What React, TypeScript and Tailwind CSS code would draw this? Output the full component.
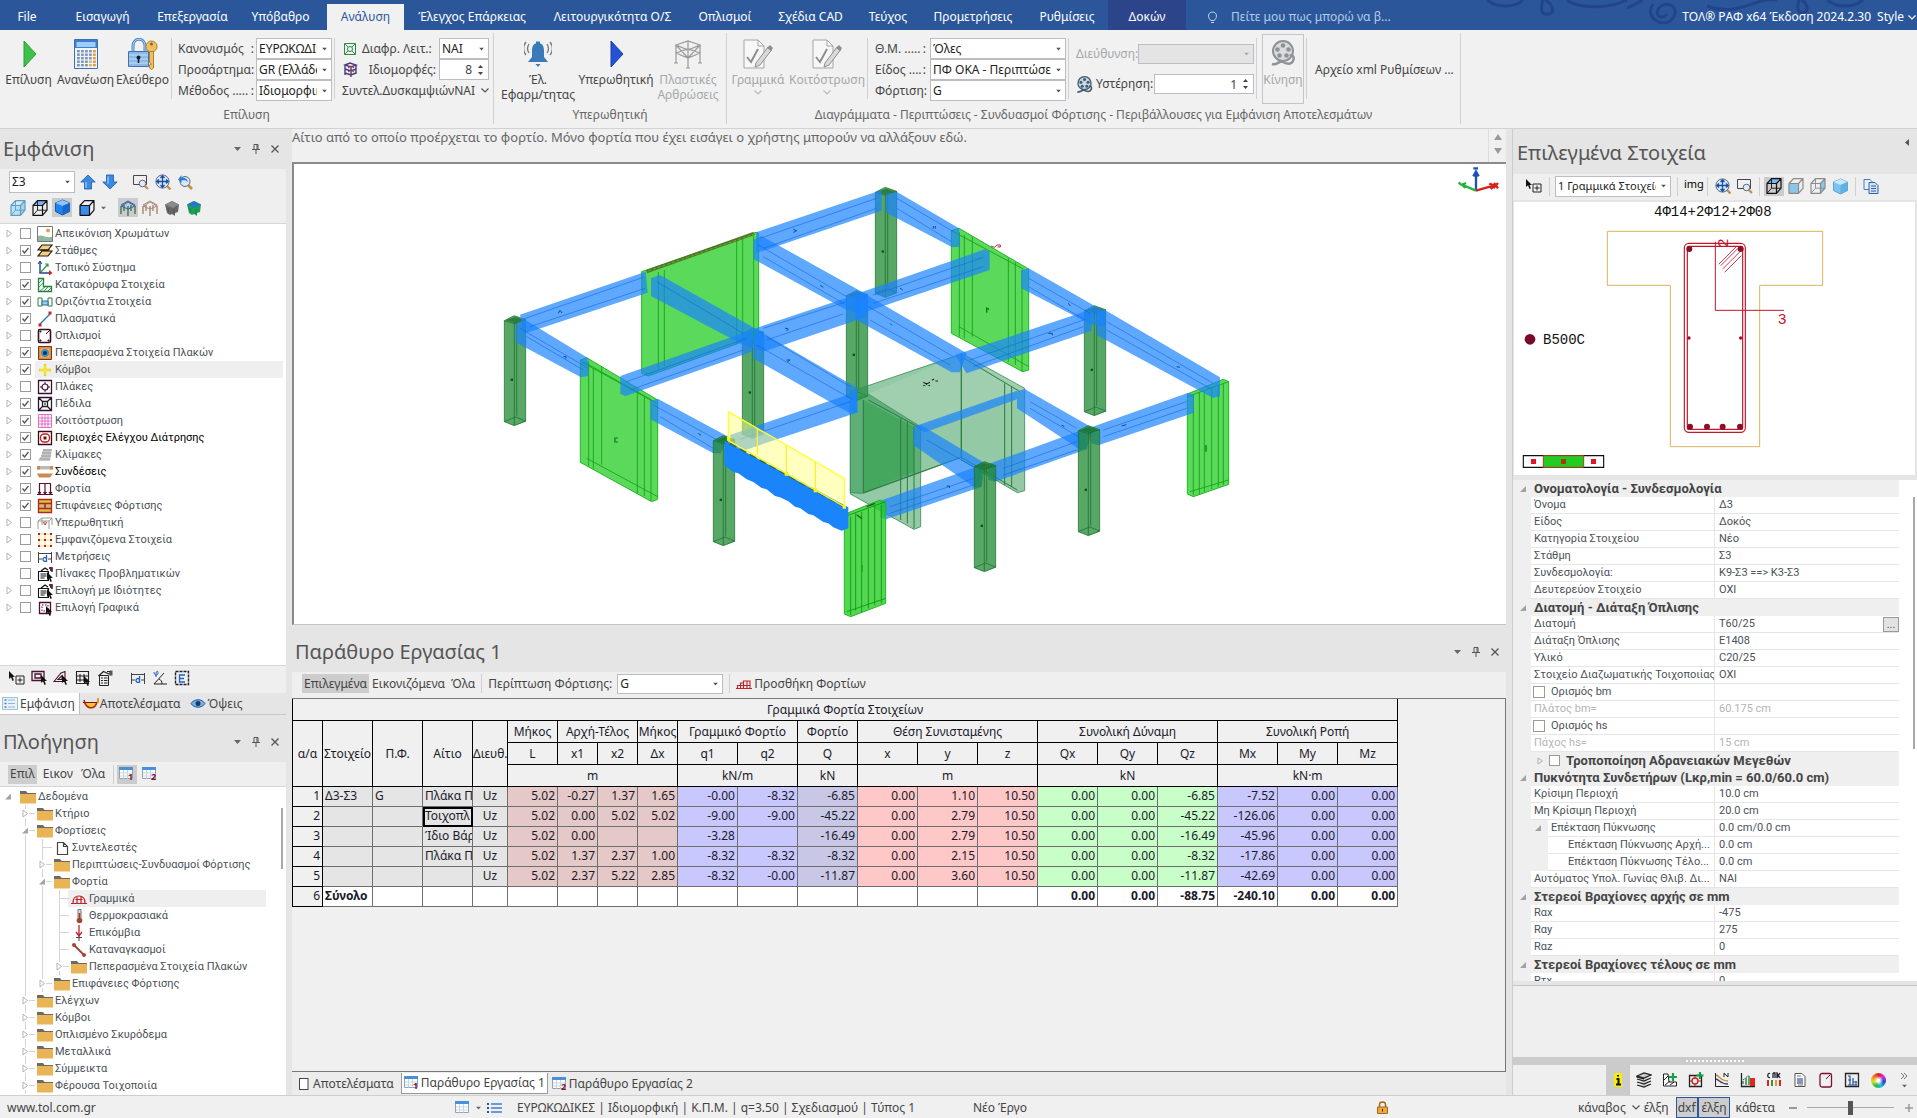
import React from "react";

type Kids = { children?: React.ReactNode };

/* ---------- small building blocks ---------- */

function Ic({ children, s = 16, vb = 16 }: Kids & { s?: number; vb?: number }) {
  return (
    <svg width={s} height={s} viewBox={`0 0 ${vb} ${vb}`} fill="none" className="block shrink-0" aria-hidden="true">
      {children}
    </svg>
  );
}

function Caret({ className = "" }: { className?: string }) {
  return (
    <svg width="7" height="4" viewBox="0 0 7 4" className={`shrink-0 ${className}`} aria-hidden="true">
      <path d="M0 0h7L3.500 4z" fill="#666" />
    </svg>
  );
}

function Chevron({ color = "#555" }: { color?: string }) {
  return (
    <svg width="8" height="5" viewBox="0 0 8 5" fill="none" className="shrink-0" aria-hidden="true">
      <path d="M.5.5 4 4 7.500.5" stroke={color} strokeWidth="1.200" />
    </svg>
  );
}

function Combo({ value, label, className = "", id, disabled = false }: { value: string; label?: string; className?: string; id?: string; disabled?: boolean }) {
  return (
    <span className={`relative block shrink-0 ${className}`}>
      <select
        id={id}
        aria-label={label}
        disabled={disabled}
        defaultValue={value}
        className="block h-full w-full appearance-none overflow-hidden border border-[#bcbcc4] bg-white pl-[2px] pr-[14px] text-[#222] disabled:bg-[#e4e4e4]"
      >
        <option value={value}>{value}</option>
      </select>
      <svg width="5" height="3" viewBox="0 0 5 3" className="pointer-events-none absolute right-[5px] top-1/2 -translate-y-1/2" aria-hidden="true">
        <path d="M0 0h5L2.500 3z" fill={disabled ? "#aaa" : "#555"} />
      </svg>
    </span>
  );
}

function Spin({ value, label, id, className = "" }: { value: string; label?: string; id?: string; className?: string }) {
  return (
    <span className={`relative block shrink-0 ${className}`}>
      <input id={id} aria-label={label} defaultValue={value} className="block h-full w-full border border-[#bcbcc4] bg-white pr-[16px] text-right text-xs text-[#444]" />
      <svg width="5" height="10" viewBox="0 0 5 10" className="pointer-events-none absolute right-[6px] top-1/2 -translate-y-1/2" aria-hidden="true">
        <path d="M0 3h5L2.500 0zM0 7h5L2.500 10z" fill="#444" />
      </svg>
    </span>
  );
}

function Sep({ className = "" }: { className?: string }) {
  return <div className={`w-px shrink-0 bg-[#d0d0d0] ${className}`} />;
}

function IconBtn({ children, on = false, label }: Kids & { on?: boolean; label: string }) {
  return (
    <button aria-label={label} className={`flex h-[19px] w-[20px] shrink-0 items-center justify-center ${on ? "bg-[#cbcbcb]" : ""}`}>
      {children}
    </button>
  );
}

function PanelTitle({ children }: Kids) {
  return (
    <div className="flex h-10 shrink-0 items-center bg-[#e5e5e5] pl-[3px] pr-[7px]">
      <h2 className="flex-1 text-xl text-[#555]">{children}</h2>
      <div className="flex items-center gap-[10px]">
        <button aria-label="Μενού"><Caret /></button>
        <button aria-label="Καρφίτσωμα">
          <Ic s={10} vb={10}><path d="M3 .5h4v5H3zM6 .5v5M1 5.500h8M5 5.500V10" stroke="#555" /></Ic>
        </button>
        <button aria-label="Κλείσιμο">
          <Ic s={8} vb={8}><path d="m.5.5 7 7m0-7-7 7" stroke="#555" strokeWidth="1.300" /></Ic>
        </button>
      </div>
    </div>
  );
}

/* ---------- icons ---------- */

function Cube({ front = "none", top = "none", side = "none", line = "#111", back = true }: { front?: string; top?: string; side?: string; line?: string; back?: boolean }) {
  return (
    <Ic>
      <path d="M1 5.500h9.500v10H1z" fill={front} />
      <path d="M1 5.500 5.500.7H15L10.500 5.500z" fill={top} />
      <path d="M10.500 5.500 15 .7v9.500l-4.500 5z" fill={side} />
      {back && <path d="M5.500.7v9.500H15M5.500 10.200 1 15.300" stroke={line} strokeWidth=".9" />}
      <path d="M1 5.500h9.500v9.800H1zM1 5.500 5.500.7H15L10.500 5.500M15 .7v9.500l-4.500 5.100" stroke={line} strokeWidth="1.200" strokeLinejoin="round" />
    </Ic>
  );
}
const SolidCube = ({ light = false }: { light?: boolean }) => (
  <Ic s={17} vb={17}>
    <path d="M8.500 1 15.500 4v8.500l-7 3.500-7-3.500V4z" fill={light ? "#7cc3ef" : "#2383ec"} stroke={light ? "#5aa4d4" : "#1458b5"} />
    <path d="M8.500 1 15.500 4l-7 3-7-3z" fill={light ? "#c9e8fb" : "#8cc4fb"} />
    <path d="M8.500 7v9l7-3.500V4z" fill={light ? "#5fb0e4" : "#1668cf"} />
  </Ic>
);
const ZoomWin = () => (
  <Ic>
    <path d="M.5 1.500h13v9H.5z" stroke="#445" />
    <path d="m11.500 11.500 3.500 3.500" stroke="#c98a4b" strokeWidth="2.200" />
    <circle cx="9.500" cy="9.500" r="3.300" fill="#dcecf8" stroke="#667" />
  </Ic>
);
const ZoomAll = () => (
  <Ic>
    <path d="m12 12 3.500 3.500" stroke="#c98a4b" strokeWidth="2.400" />
    <circle cx="7.500" cy="7.500" r="6.600" fill="#d5e7f8" stroke="#5c6c88" />
    <path d="M7.500 2v11M2 7.500h11M5.500 4l2-2.200 2 2.200m-4 7 2 2.200 2-2.200M4 5.500 1.800 7.500 4 9.500m7-4 2.200 2L11 9.500" stroke="#1b4f9c" strokeWidth="1.300" />
  </Ic>
);
const ZoomPrev = () => (
  <Ic>
    <path d="m11 11 4 4" stroke="#c98a4b" strokeWidth="2.600" />
    <circle cx="8" cy="7.500" r="5" fill="#d5e7f8" stroke="#667" />
    <path d="M1 5.500 4.500 1v2.500c3 0 5.500 1 6.500 4.500-1.500-1.500-3.500-1.800-6.500-1.600V9z" fill="#2a7fd4" />
  </Ic>
);
const BlueArrow = ({ down = false }: { down?: boolean }) => (
  <Ic>
    <path d={down ? "M8 15 .8 8H4.500V1h7v7h3.700z" : "M8 1 .8 8H4.500v7h7V8h3.700z"} fill="#3a8ae2" stroke="#2566ae" strokeWidth=".9" />
    <path d={down ? "M6 2.500v7" : "M6 8v6"} stroke="#8bc2f5" strokeWidth="1.500" />
  </Ic>
);
const Frame3D = ({ c = "#2b6b3a", t = "#2a5fb8" }: { c?: string; t?: string }) => (
  <Ic>
    <path d="M1 6v8M4 5v6M8 6v10M11 5v6M15 5.500V14" stroke={c} strokeWidth="1.200" />
    <path d="M1 6.500 8 2l7 4M1 5l7-4 7 4M1 6l7 3 7-3" stroke={t} strokeWidth="1" />
  </Ic>
);
const Blob = ({ a, b }: { a: string; b: string }) => (
  <Ic>
    <path d="M1 4.500 8 1l7 3.500-1 7.500-3 1v3l-3-2-2 1-3-2z" fill={a} />
    <path d="M1 4.500 8 1l7 3.500L9 8z" fill={b} />
    <path d="m4 8 .5 4M10 9v5" stroke="#0003" />
  </Ic>
);
const CursorPath = ({ x = 0, y = 0 }: { x?: number; y?: number }) => (
  <path transform={`translate(${x} ${y})`} d="M0 0v8l2-1.700L3.500 10l1.400-.7L3.500 6H6z" fill="#111" />
);
const SelPlus = () => (
  <Ic><CursorPath x={0} y={1} /><path d="M7 6h8v8H7zM11 7.500v5M8.500 10h5" stroke="#222" /></Ic>
);
const Folder = () => (
  <Ic>
    <path d="M0 2h6l1.500 2H16v2H0z" fill="#6d6a63" />
    <path d="M0 5h16v9.500H0z" fill="#e9b456" />
  </Ic>
);
const GridDoc = ({ n }: { n: string }) => (
  <svg width="16" height="16" viewBox="0 0 16 16" className="block shrink-0" aria-hidden="true">
    <path d="M.5 2.500h13v10H.5z" fill="#fff" stroke="#8fa3b8" />
    <path d="M0 1h14v3H0z" fill="#4a90d6" />
    <path d="M4.500 4v8.500m4-8.500v8.500M1 7h12M1 10h12" stroke="#c7d6e4" fill="none" />
    <text x="9" y="14" fontSize="9" fontWeight="700" fill="#7d1030" fontFamily="Noto Sans">{n}</text>
  </svg>
);
const Dim = () => (
  <svg width="16" height="16" viewBox="0 0 16 16" fill="none" className="block shrink-0" aria-hidden="true">
    <path d="M1 4.500h14M1.500 3v11M14.500 3v11M2 10h3m6 0h3" stroke="#444" />
    <path d="M9.500 6v7M9.500 9.500c-1-1.500-3.500-1-3.500 1s2.500 2.500 3.500 1" stroke="#1f5fc8" strokeWidth="1.300" />
  </svg>
);
const PropPick = () => (
  <Ic>
    <path d="M1.500 5.500h10v9h-10zM3.500 8h6M3.500 10h6M3.500 12h4" stroke="#111" strokeWidth="1.100" />
    <path d="M4 5 8 2l3 2M12 2h3v4" stroke="#111" strokeWidth="1.300" />
    <path d="M13 1h2.500v4H13z" fill="#6b1f4a" />
    <CursorPath x={10} y={6} />
  </Ic>
);
const PropHand = () => (
  <Ic>
    <path d="M2.500 5.500h9v10h-9zM4 8h2m1 0h3.500M4 10.500h2m1 0h3.500M4 13h2m1 0h3.500" stroke="#222" />
    <path d="m1.500 6 5-4.500L12 4M10 1.500h3v4" stroke="#222" strokeWidth="1.200" />
    <path d="M13 .5h2.500v5H13z" fill="#4b5a6a" />
  </Ic>
);
const DocPencil = () => (
  <Ic s={30} vb={30}>
    <path d="M1 1h14l6 6v22H1z" fill="#f7f7f7" stroke="#a5a5a5" />
    <path d="M15 1v6h6" stroke="#a5a5a5" />
    <path d="m4 18 4 5 7-13" stroke="#8e8e8e" strokeWidth="2" />
    <path d="m13 24 12-16 3.500 3L17 26l-5 2z" fill="#d9d9d9" stroke="#8e8e8e" />
    <path d="m24 9 3-3 3 3-2 3z" fill="#8e8e8e" />
  </Ic>
);
const Reel = ({ s = 26, c = "#8f9398", f = "#d9dbdd" }: { s?: number; c?: string; f?: string }) => (
  <Ic s={s} vb={26}>
    <circle cx="13" cy="11" r="10" fill={f} stroke={c} strokeWidth="2" />
    <circle cx="13" cy="5.500" r="2.300" fill={c} />
    <circle cx="7.500" cy="9.500" r="2.300" fill={c} />
    <circle cx="18.500" cy="9.500" r="2.300" fill={c} />
    <circle cx="9.500" cy="15.500" r="2.300" fill={c} />
    <circle cx="16.500" cy="15.500" r="2.300" fill={c} />
    <path d="M2 24c5 2 7-4 11-2s8 3 10-1-1-7-3-5" stroke={c} strokeWidth="2.500" />
  </Ic>
);
const Calc = () => (
  <Ic s={32} vb={32}>
    <path d="M4.500 1.500h23v29h-23z" fill="#eef4fb" stroke="#3f6ea8" />
    <path d="M5 2h22v8H5z" fill="#3a7fd0" />
    <path d="M6.500 4h19v5h-19z" fill="#9fcdf5" />
    {[0, 1, 2, 3, 4].map((r) =>
      [0, 1, 2, 3, 4].map((c) => (
        <path key={`${r}-${c}`} d={`M${7 + c * 4} ${12 + r * 3.5}h2.800v2.400h-2.800z`} fill={c === 4 ? "#e59a3c" : r > 2 && c > 2 ? "#d9b36a" : "#7f97b5"} />
      ))
    )}
  </Ic>
);
const LockKey = () => (
  <Ic s={32} vb={32}>
    <path d="M6 13V8c0-9 12-9 12 0v5" stroke="#4c86c8" strokeWidth="3" />
    <path d="M6 13V8c0-9 12-9 12 0v5" stroke="#b9d7f4" strokeWidth="1" />
    <path d="M1.500 13.500h20v15h-20z" fill="#8bb9ea" stroke="#3d73b3" />
    <path d="M2 17h19M2 21h19M2 25h19" stroke="#c4def7" />
    <circle cx="11.500" cy="19.500" r="2" fill="#123" />
    <path d="M11.500 20v5" stroke="#123" strokeWidth="1.600" />
    <circle cx="24.500" cy="8.500" r="5.500" fill="#edc063" stroke="#b07f28" />
    <circle cx="24.500" cy="6" r="1.500" fill="#8c6220" />
    <path d="M22.500 13.500h4V30l-2 1.500-2-1.500v-3l2-1-2-1.500z" fill="#edc063" stroke="#b07f28" />
  </Ic>
);
const Play = ({ c, d }: { c: string; d: string }) => (
  <Ic s={28} vb={28}><path d="M9 1v26l12-13z" fill={c} stroke={d} /></Ic>
);
const Bell = () => (
  <Ic s={28} vb={28}>
    <path d="M14 3c-5 0-6 4-6 8v6l-4 5h20l-4-5v-6c0-4-1-8-6-8z" fill="#3a7ab8" />
    <path d="M12 1.500h4V4h-4zM11.500 24h5l-2.500 3z" fill="#3a7ab8" />
    <path d="M5 4c-2 3-2 6 0 9M2 2c-3 4-3 9 0 13M23 4c2 3 2 6 0 9M26 2c3 4 3 9 0 13" stroke="#777" strokeWidth="1.300" />
  </Ic>
);
const FrameGray = () => (
  <Ic s={30} vb={30}>
    <path d="m3 6 12-4 12 4-12 5zM3 6v18M15 11v18M27 6v18M3 14l12 5 12-5M3 14l12-4 12 4M15 2v8M3 6l12 13M27 6 15 19M1 24h4M13 29h4M25 24h4" stroke="#999" strokeWidth="1.200" />
  </Ic>
);

const treeIcons: Record<string, React.ReactNode> = {
  colors: <Ic><path d="M.5.5h15v15H.5z" fill="#fff" stroke="#777" /><circle cx="11" cy="4.500" r="2" fill="#d8a25c" /><path d="M1 10c4-2 6 2 14 1v4H1z" fill="#8fb8a0" /></Ic>,
  levels: <Ic><path d="M5 2h10l-4 5H1zM5 8h10l-4 5H1z" fill="#f2cf84" stroke="#221a0c" strokeWidth="1.200" /><path d="M3 7h10" stroke="#221a0c" /></Ic>,
  axes: <Ic><path d="M3 1v12h11" stroke="#24408e" strokeWidth="1.400" /><path d="m4 12 7-8M8 4h3v3" stroke="#2f9a46" strokeWidth="1.200" /><path d="m1 4 2-3 2 3" stroke="#24408e" /><path d="m12 10 3.500 3-3.500 2.500z" fill="#c22" /></Ic>,
  vert: <Ic><path d="M1.500 1.500h5v8h8v5h-13z" fill="#eaf6ec" stroke="#2c7d42" strokeWidth="1.300" /><path d="m2 6 4-4M2 10l4-4M3 14l6-5m-2 5 5-5m-1 5 3-3" stroke="#2c7d42" strokeWidth=".8" /></Ic>,
  horiz: <Ic><path d="M1 4h4v8H1zm10 0h4v8h-4z" fill="#fff" stroke="#2c7d42" /><path d="M5 7h6v4H5z" fill="#8fd0ee" stroke="#2c6b9d" /></Ic>,
  plasm: <Ic><path d="M3 13 13 3" stroke="#2a6fb5" strokeWidth="1.200" /><path d="M1.500 12.500h3v3h-3zM11.500.5h3v3h-3z" fill="#c2272d" /></Ic>,
  rebar: <Ic><rect x="1.500" y="1.500" width="12" height="13" rx="1.500" stroke="#3b0a22" strokeWidth="1.600" /><path d="m13 2-4 4M3 3h1v1H3zm8 9h1v1h-1zm-8 0h1v1H3z" stroke="#3b0a22" /></Ic>,
  fem: <Ic><path d="M1.500 1.500h13v13h-13z" fill="#e08a35" stroke="#8a2f1d" /><path d="M3.500 3.500h9v9h-9z" fill="#d8c25e" /><circle cx="8" cy="8" r="4" fill="#3f8fbf" /><circle cx="8" cy="8" r="2" fill="#152a66" /></Ic>,
  node: <Ic><path d="M8 2v12M2 8h12" stroke="#e8d400" strokeWidth="2.400" /><path d="M8 3v10M3 8h10" stroke="#fff25a" strokeWidth=".9" /></Ic>,
  slab: <Ic><path d="M1.500 1.500h13v13h-13z" stroke="#3b1030" strokeWidth="1.300" /><circle cx="8" cy="8" r="3" stroke="#3b1030" strokeWidth="1.200" /><path d="M8 3v2m0 6v2M3 8h2m6 0h2" stroke="#3b1030" /></Ic>,
  foot: <Ic><path d="M1.500 1.500h13v13h-13zM5.500 5.500h5v5h-5zM2 2l3.500 3.500M14 2l-3.500 3.500M2 14l3.500-3.500M14 14l-3.500-3.500" stroke="#2b1830" strokeWidth="1.300" /><path d="M7 7h2v2H7z" fill="#4a9a60" /></Ic>,
  raft: <Ic><path d="M1.500 1.500h13v13h-13zM5 1v14M8 1v14M11 1v14M1 5h14M1 8h14M1 11h14" stroke="#dd6fc4" /></Ic>,
  punch: <Ic><path d="M1.500 1.500h13v13h-13z" stroke="#3b0a22" strokeWidth="1.300" /><rect x="3.500" y="4" width="9" height="8" rx="3.500" stroke="#c22" strokeWidth="1.400" /><path d="M6.500 6.500h3v3h-3z" fill="#611" /></Ic>,
  stairs: <Ic><path d="M6 2h9l-2 12H1l2-4h1l1-4z" fill="#c9c9c9" /><path d="M6 3h9M5 6h9M4 9h10M3 12h10" stroke="#999" /></Ic>,
  conn: <Ic><path d="M0 2h16v3.500H0z" fill="#b9b9b9" /><path d="M0 2h3v3.500H0zm13 0h3v3.500h-3z" fill="#c98a55" /><path d="M0 9.500h16l-3 4H2z" fill="#c98a55" /></Ic>,
  loads: <Ic><path d="M0 13.500h16M2.500 3v10M8 3v10M13.500 3v10M2 2.500h12M1 11l1.500 2L4 11m2.500 0L8 13l1.500-2m2.500 0 1.500 2 1.500-2" stroke="#5b0f2a" strokeWidth="1.200" /></Ic>,
  surf: <Ic><path d="M1.500 1.500h13v13h-13z" fill="#d9c040" stroke="#b3261e" strokeWidth="1.300" /><path d="M2 5.500h12M2 10.500h12M8 6v4" stroke="#b3261e" strokeWidth="1.600" /><path d="M3 7h4v2H3zm6 0h4v2H9z" fill="#b7b7b7" /></Ic>,
  push: <Ic><path d="m1 6 4-3h10l-3 3zM1 6v8M12 6v8M5 3v7M15 3v7" stroke="#9a9a9a" /><path d="M8 6v4m-2-3 2 3 2-3" stroke="#b55" /></Ic>,
  shown: <Ic><path d="M2 2h12M2 8h12M2 14h12M2 2v12M8 2v12M14 2v12" stroke="#f2d86a" /><path d="M1 1h2v2H1zm6 0h2v2H7zm6 0h2v2h-2zM1 7h2v2H1zm6 0h2v2H7zm6 0h2v2h-2zM1 13h2v2H1zm6 0h2v2H7zm6 0h2v2h-2z" fill="#b3261e" /></Ic>,
  dim: <Dim />,
  prop: <PropPick />,
  pick: <Ic><path d="M2.500 2.500h11v11h-11z" stroke="#4a1232" strokeWidth="1.300" /><path d="M5 5h6v6H5z" stroke="#4a1232" strokeDasharray="1.500 1.500" /><CursorPath x={9} y={6} /></Ic>,
};

/* ---------- data ---------- */

const tabs: [string, string][] = [
  ["File", "w-[54px]"], ["Εισαγωγή", "w-[97px]"], ["Επεξεργασία", "w-[83px]"], ["Υπόβαθρο", "w-[93px]"],
  ["Ανάλυση", "w-[77px]"], ["Έλεγχος Επάρκειας", "w-[136px]"], ["Λειτουργικότητα Ο/Σ", "w-[145px]"],
  ["Οπλισμοί", "w-[80px]"], ["Σχέδια CAD", "w-[91px]"], ["Τεύχος", "w-[64px]"], ["Προμετρήσεις", "w-[106px]"],
  ["Ρυθμίσεις", "w-[82px]"], ["Δοκών", "w-[78px]"],
];

type ViewItem = { t: string; i: string; on?: boolean; leaf?: boolean; strong?: boolean; hot?: boolean };
const viewItems: ViewItem[] = [
  { t: "Απεικόνιση Χρωμάτων", i: "colors" }, { t: "Στάθμες", i: "levels", on: true }, { t: "Τοπικό Σύστημα", i: "axes" },
  { t: "Κατακόρυφα Στοιχεία", i: "vert", on: true }, { t: "Οριζόντια Στοιχεία", i: "horiz", on: true },
  { t: "Πλασματικά", i: "plasm", on: true }, { t: "Οπλισμοί", i: "rebar" }, { t: "Πεπερασμένα Στοιχεία Πλακών", i: "fem", on: true },
  { t: "Κόμβοι", i: "node", on: true, hot: true }, { t: "Πλάκες", i: "slab" }, { t: "Πέδιλα", i: "foot", on: true },
  { t: "Κοιτόστρωση", i: "raft", on: true }, { t: "Περιοχές Ελέγχου Διάτρησης", i: "punch", on: true, strong: true },
  { t: "Κλίμακες", i: "stairs", on: true }, { t: "Συνδέσεις", i: "conn", on: true, strong: true }, { t: "Φορτία", i: "loads", on: true },
  { t: "Επιφάνειες Φόρτισης", i: "surf", on: true }, { t: "Υπερωθητική", i: "push" }, { t: "Εμφανιζόμενα Στοιχεία", i: "shown" },
  { t: "Μετρήσεις", i: "dim" }, { t: "Πίνακες Προβληματικών", i: "prop", leaf: true }, { t: "Επιλογή με Ιδιότητες", i: "prop" },
  { t: "Επιλογή Γραφικά", i: "pick" },
];

type NavItem = { t: string; l: number; s: "open" | "shut" | "leaf"; i?: React.ReactNode; hot?: boolean };
const navItems: NavItem[] = [
  { t: "Δεδομένα", l: 0, s: "open" }, { t: "Κτήριο", l: 1, s: "shut" }, { t: "Φορτίσεις", l: 1, s: "open" },
  { t: "Συντελεστές", l: 2, s: "leaf", i: <Ic><path d="M3.500 2.500h6l4 4v8h-10zM9.500 2.500v4h4" fill="#fff" stroke="#444" strokeWidth="1.200" /></Ic> },
  { t: "Περιπτώσεις-Συνδυασμοί Φόρτισης", l: 2, s: "shut" }, { t: "Φορτία", l: 2, s: "open" },
  { t: "Γραμμικά", l: 3, s: "leaf", hot: true, i: <Ic><path d="M0 12.500h16M2 12c0-5 2-7 6-7s6 2 6 7M6 6v6M10 6v6M4.500 8.500h7" stroke="#c22027" strokeWidth="1.200" /></Ic> },
  { t: "Θερμοκρασιακά", l: 3, s: "leaf", i: <Ic><path d="M7 1.500h3v9H7z" fill="#ddd" stroke="#777" /><path d="M8.500 5v7" stroke="#a33" strokeWidth="1.500" /><circle cx="8.500" cy="12.500" r="2.800" fill="#9a4a33" /></Ic> },
  { t: "Επικόμβια", l: 3, s: "leaf", i: <Ic><path d="M8 0v10m-3-3 3 4 3-4" stroke="#c22027" strokeWidth="1.300" /><path d="M5 12.500h6M8 11v5" stroke="#444" /></Ic> },
  { t: "Καταναγκασμοί", l: 3, s: "leaf", i: <Ic><path d="m3 3 10 10" stroke="#a34534" strokeWidth="2" /><circle cx="3" cy="3" r="2" fill="#a34534" /><circle cx="13" cy="13" r="2" fill="#a34534" /></Ic> },
  { t: "Πεπερασμένα Στοιχεία Πλακών", l: 3, s: "shut" }, { t: "Επιφάνειες Φόρτισης", l: 2, s: "shut" },
  { t: "Ελέγχων", l: 1, s: "shut" }, { t: "Κόμβοι", l: 1, s: "shut" }, { t: "Οπλισμένο Σκυρόδεμα", l: 1, s: "shut" },
  { t: "Μεταλλικά", l: 1, s: "shut" }, { t: "Σύμμεικτα", l: 1, s: "shut" }, { t: "Φέρουσα Τοιχοποιία", l: 1, s: "shut" },
];

const rows: string[][] = [
  ["1", "Δ3-Σ3", "G", "Πλάκα Π", "Uz", "5.02", "-0.27", "1.37", "1.65", "-0.00", "-8.32", "-6.85", "0.00", "1.10", "10.50", "0.00", "0.00", "-6.85", "-7.52", "0.00", "0.00"],
  ["2", "", "", "Τοιχοπλ", "Uz", "5.02", "0.00", "5.02", "5.02", "-9.00", "-9.00", "-45.22", "0.00", "2.79", "10.50", "0.00", "0.00", "-45.22", "-126.06", "0.00", "0.00"],
  ["3", "", "", "Ίδιο Βάρ", "Uz", "5.02", "0.00", "", "", "-3.28", "", "-16.49", "0.00", "2.79", "10.50", "0.00", "0.00", "-16.49", "-45.96", "0.00", "0.00"],
  ["4", "", "", "Πλάκα Π", "Uz", "5.02", "1.37", "2.37", "1.00", "-8.32", "-8.32", "-8.32", "0.00", "2.15", "10.50", "0.00", "0.00", "-8.32", "-17.86", "0.00", "0.00"],
  ["5", "", "", "", "Uz", "5.02", "2.37", "5.22", "2.85", "-8.32", "-0.00", "-11.87", "0.00", "3.60", "10.50", "0.00", "0.00", "-11.87", "-42.69", "0.00", "0.00"],
];
const total = ["6", "Σύνολο", "", "", "", "", "", "", "", "", "", "", "", "", "", "0.00", "0.00", "-88.75", "-240.10", "0.00", "0.00"];
const colW = ["w-[30px]", "w-[50px]", "w-[50px]", "w-[50px]", "w-[35px]", "w-[50px]", "w-[40px]", "w-[40px]", "w-[40px]",
  "w-[60px]", "w-[60px]", "w-[60px]", "w-[60px]", "w-[60px]", "w-[60px]", "w-[60px]", "w-[60px]", "w-[60px]", "w-[60px]", "w-[60px]", "w-[60px]"];

function cellTone(c: number) {
  if (c === 0) return "bg-[#f0f0f0] border-black";
  if (c < 5) return "bg-[#e5e5e5]";
  if (c < 9) return "bg-[#e5c8c8]";
  if (c < 11) return "bg-[#c8c8ff]";
  if (c === 11) return "bg-[#c8c8e6]";
  if (c < 15) return "bg-[#ffc8c8]";
  if (c < 18) return "bg-[#c8ffc8]";
  return "bg-[#c8c8ff]";
}

type Prop = { n: string; v?: string; k?: "head" | "check" | "mute" | "sub" | "subsub" | "headcheck"; more?: boolean };
const props: Prop[] = [
  { n: "Ονοματολογία - Συνδεσμολογία", k: "head" }, { n: "Όνομα", v: "Δ3" }, { n: "Είδος", v: "Δοκός" }, { n: "Κατηγορία Στοιχείου", v: "Νέο" },
  { n: "Στάθμη", v: "Σ3" }, { n: "Συνδεσμολογία:", v: "K9-Σ3 ==> K3-Σ3" }, { n: "Δευτερεύον Στοιχείο", v: "ΟΧΙ" },
  { n: "Διατομή - Διάταξη Όπλισης", k: "head" }, { n: "Διατομή", v: "T60/25", more: true }, { n: "Διάταξη Όπλισης", v: "E1408" },
  { n: "Υλικό", v: "C20/25" }, { n: "Στοιχείο Διαζωματικής Τοιχοποιίας", v: "ΟΧΙ" }, { n: "Ορισμός bm", k: "check" },
  { n: "Πλάτος bm=", v: "60.175 cm", k: "mute" }, { n: "Ορισμός hs", k: "check" }, { n: "Πάχος hs=", v: "15 cm", k: "mute" },
  { n: "Τροποποίηση Αδρανειακών Μεγεθών", k: "headcheck" }, { n: "Πυκνότητα Συνδετήρων (Lκρ,min = 60.0/60.0 cm)", k: "head" },
  { n: "Κρίσιμη Περιοχή", v: "10.0 cm" }, { n: "Μη Κρίσιμη Περιοχή", v: "20.0 cm" }, { n: "Επέκταση Πύκνωσης", v: "0.0 cm/0.0 cm", k: "sub" },
  { n: "Επέκταση Πύκνωσης Αρχή...", v: "0.0 cm", k: "subsub" }, { n: "Επέκταση Πύκνωσης Τέλο...", v: "0.0 cm", k: "subsub" },
  { n: "Αυτόματος Υπολ. Γωνίας Θλιβ. Δι...", v: "ΝΑΙ" }, { n: "Στερεοί Βραχίονες αρχής σε mm", k: "head" },
  { n: "Rαx", v: "-475" }, { n: "Rαy", v: "275" }, { n: "Rαz", v: "0" }, { n: "Στερεοί Βραχίονες τέλους σε mm", k: "head" }, { n: "Rτx", v: "0" },
];

/* ---------- ribbon ---------- */

function BigBtn({ icon, children, className = "", muted = false, drop = false }: Kids & { icon: React.ReactNode; className?: string; muted?: boolean; drop?: boolean }) {
  return (
    <button className={`flex shrink-0 flex-col items-center pt-[5px] text-center text-xs leading-[15px] ${muted ? "text-[#a3a8ac]" : "text-[#444]"} ${className}`}>
      <span className="flex h-8 items-center">{icon}</span>
      <span className="mt-[2px] whitespace-nowrap">{children}</span>
      {drop && <span className="mt-[3px]"><Chevron color="#bbb" /></span>}
    </button>
  );
}

function Group({ children, caption, className = "" }: Kids & { caption: string; className?: string }) {
  return (
    <section className={`flex shrink-0 flex-col ${className}`}>
      <div className="flex h-[74px]">{children}</div>
      <div className="text-center text-xs text-[#666]">{caption}</div>
    </section>
  );
}

function Ribbon() {
  return (
    <header className="shrink-0">
      <div className="relative flex h-[30px] items-end bg-[#2b579a] text-xs text-white">
        <svg width="440" height="24" viewBox="0 0 440 24" fill="none" className="absolute right-0 top-0" stroke="#23448a" strokeWidth="3" aria-hidden="true">
          <path d="M10 0c10 8 28 8 36 0M66 0c-4 12 0 15 6 14s4-10-4-14M90 0c10 8 40 10 60-0M150 8c10-4 14-8 16-8M176 4c-10 14 12 26 20 14s-8-18-14-10 4 12 8 6M230 6c30 12 50-10 70-6M322 0c-4 12 2 14 6 12s2-10-4-12M350 0c10 8 26 8 36 0" />
        </svg>
        <nav className="relative flex">
          {tabs.map(([t, w]) => (
            <button key={t} className={`h-[26px] whitespace-nowrap pb-[1px] ${w} ${t === "Ανάλυση" ? "bg-[#f1f1f1] text-[#2b579a]" : t === "Δοκών" ? "bg-[#2c4489] shadow-[0_-4px_0_#2c4489]" : ""}`}>{t}</button>
          ))}
        </nav>
        <div className="relative flex h-[26px] flex-1 items-center pl-[20px] text-[#b5cbe8]">
          <Ic s={13} vb={13}><path d="M4.500 9.500h4M5 11.500h3M4.500 9C1 6 2.500 1 6.500 1S12 6 8.500 9" stroke="#c5d6ee" /></Ic>
          <input aria-label="Αναζήτηση" placeholder="Πείτε μου πως μπορώ να β..." className="ml-[12px] w-[190px] bg-transparent placeholder:text-[#b5cbe8]" />
          <span className="ml-auto text-white">ΤΟΛ® ΡΑΦ x64 Έκδοση 2024.2.30</span>
          <button className="ml-[6px] mr-px flex items-center gap-[4px] text-white">Style <Chevron color="#fff" /></button>
        </div>
      </div>

      <div className="flex h-[99px] border-b border-[#d2d2d2] bg-[#f1f1f1] pt-[3px] text-xs text-[#444]">
        <Group caption="Επίλυση" className="w-[493px]">
          <BigBtn icon={<Play c="#3fc24a" d="#2b9a38" />} className="w-[57px]">Επίλυση</BigBtn>
          <BigBtn icon={<Calc />} className="w-[57px]">Ανανέωση</BigBtn>
          <BigBtn icon={<LockKey />} className="w-[57px]">Ελεύθερο</BigBtn>
          <Sep className="mb-2 mt-[5px]" />
          <div className="grid grid-cols-[78px_76px] grid-rows-[21px_21px_21px] items-center whitespace-nowrap pl-[6px] pt-[5px]">
            <label htmlFor="kan" className="flex justify-between pr-[2px]"><span>Κανονισμός</span><span>:</span></label><Combo id="kan" value="ΕΥΡΩΚΩΔΙΚΕΣ" className="h-[21px]" />
            <label htmlFor="pros" className="flex justify-between pr-[2px]"><span>Προσάρτημα</span><span>:</span></label><Combo id="pros" value="GR (Ελλάδα)" className="h-[21px]" />
            <label htmlFor="meth" className="flex justify-between pr-[2px]"><span>Μέθοδος .....</span><span>:</span></label><Combo id="meth" value="Ιδιομορφική" className="h-[21px]" />
          </div>
          <Sep className="mb-2 ml-[2px] mt-[5px]" />
          <div className="grid grid-cols-[97px_50px] grid-rows-[21px_21px_21px] items-center whitespace-nowrap pl-[7px] pt-[5px]">
            <label htmlFor="dia" className="flex items-center gap-[6px] pl-[2px]">
              <Ic s={12} vb={12}><path d="M.5.5h11v11H.5z" stroke="#2f8a45" /><circle cx="6" cy="6" r="2.500" stroke="#2f8a45" /><path d="m1 1 3 3m4 4 3 3m0-10L8 4M4 8l-3 3" stroke="#2f8a45" /></Ic>
              Διαφρ. Λειτ.:
            </label>
            <Combo id="dia" value="ΝΑΙ" className="h-[21px]" />
            <label htmlFor="idio" className="flex items-center justify-between pl-px pr-[3px]">
              <Ic s={15} vb={15}><path d="m2 3 5-2 6 2-5 2zM2 3v10M8 5v10M13 3v9M2 7l6 2 5-2M2 11l6 2 5-2" stroke="#4a3c7a" strokeWidth="1.400" /><path d="m5 6 3-2 3 2M5 10l3-2 3 2" stroke="#a33" /></Ic>
              Ιδιομορφές:
            </label>
            <Spin id="idio" value="8" className="h-[21px]" />
            <button className="col-span-2 flex items-center justify-between"><span>Συντελ.ΔυσκαμψιώνΝΑΙ</span><Chevron /></button>
          </div>
        </Group>
        <Sep className="mb-1" />
        <Group caption="Υπερωθητική" className="w-[232px]">
          <BigBtn icon={<Bell />} className="w-[88px]">Έλ.<br />Εφαρμ/τητας</BigBtn>
          <BigBtn icon={<Play c="#2452d6" d="#1a3da8" />} className="w-[68px]">Υπερωθητική</BigBtn>
          <BigBtn icon={<FrameGray />} className="w-[76px]" muted>Πλαστικές<br />Αρθρώσεις</BigBtn>
        </Group>
        <Sep className="mb-1" />
        <Group caption="Διαγράμματα - Περιπτώσεις - Συνδυασμοί Φόρτισης - Περιβάλλουσες για Εμφάνιση Αποτελεσμάτων" className="w-[733px]">
          <BigBtn icon={<DocPencil />} className="w-[62px]" muted drop>Γραμμικά</BigBtn>
          <BigBtn icon={<DocPencil />} className="w-[76px]" muted drop>Κοιτόστρωση</BigBtn>
          <Sep className="mb-2 ml-[2px] mt-[5px]" />
          <div className="grid grid-cols-[55px_136px] grid-rows-[21px_21px_21px] items-center whitespace-nowrap pl-[7px] pt-[5px]">
            <label htmlFor="thm" className="flex justify-between pr-[4px]"><span>Θ.Μ. .....</span><span>:</span></label><Combo id="thm" value="Όλες" className="h-[21px]" />
            <label htmlFor="eid" className="flex justify-between pr-[4px]"><span>Είδος ....</span><span>:</span></label><Combo id="eid" value="ΠΦ ΟΚΑ - Περιπτώσε" className="h-[21px]" />
            <label htmlFor="fort" className="flex justify-between pr-[4px]"><span>Φόρτιση</span><span>:</span></label><Combo id="fort" value="G" className="h-[21px]" />
          </div>
          <Sep className="mb-2 ml-[2px] mt-[5px]" />
          <div className="flex w-[185px] flex-col gap-[10px] pl-[7px] pt-[11px]">
            <div className="flex items-center text-[#a3a8ac]">
              <label htmlFor="dir" className="flex-1">Διεύθυνση:</label>
              <Combo id="dir" value="" className="h-[20px] w-[116px]" disabled />
            </div>
            <div className="flex items-center">
              <label htmlFor="hys" className="flex flex-1 items-center gap-[3px]"><Reel s={17} c="#44586e" f="#c5d8e6" />Υστέρηση:</label>
              <Spin id="hys" value="1" className="h-[20px] w-[100px]" />
            </div>
          </div>
          <Sep className="mb-2 ml-[2px] mt-[5px]" />
          <button className="ml-[5px] mt-[1px] flex h-[70px] w-[42px] shrink-0 flex-col items-center border border-[#c4c4cc] pt-[5px] leading-[15px] text-[#a3a8ac]">
            <Reel />
            <span className="mt-[6px]">Κίνηση</span>
          </button>
          <Sep className="mb-2 ml-[2px] mt-[5px]" />
          <button className="ml-[8px] whitespace-nowrap">Αρχείο xml Ρυθμίσεων ...</button>
        </Group>
        <Sep className="mb-1" />
      </div>
    </header>
  );
}

/* ---------- left column ---------- */

function Twist({ open }: { open: boolean }) {
  return (
    <svg width="7" height="9" viewBox="0 0 7 9" fill="none" className="relative shrink-0 bg-white" aria-hidden="true">
      {open ? <path d="M6 1.500v6H0z" fill="#a2a2a2" /> : <path d="M1 1l4.500 3.500L1 8z" stroke="#b5b5b5" />}
    </svg>
  );
}

function Tick({ on, label }: { on?: boolean; label: string }) {
  return (
    <span className="relative block h-[11px] w-[11px] shrink-0">
      <input type="checkbox" defaultChecked={on} aria-label={label} className="peer block h-[11px] w-[11px] appearance-none border border-[#9a9a9a] bg-white" />
      <svg width="11" height="11" viewBox="0 0 11 11" fill="none" className="pointer-events-none absolute left-0 top-0 hidden peer-checked:block" aria-hidden="true">
        <path d="m2.500 5.500 2 2.500 4-5" stroke="#555" strokeWidth="1.300" />
      </svg>
    </span>
  );
}

function LeftColumn() {
  return (
    <aside className="flex w-[286px] shrink-0 flex-col bg-[#e5e5e5]">
      <PanelTitle>Εμφάνιση</PanelTitle>
      <div className="h-[54px] shrink-0 bg-[#efefef] text-xs">
        <div className="flex h-[25px] items-center pl-[9px]">
          <Combo label="Στάθμη" value="Σ3" className="h-[22px] w-[66px]" />
          <div className="ml-[3px] flex gap-[2px]">
            <IconBtn label="Πάνω"><BlueArrow /></IconBtn>
            <IconBtn label="Κάτω"><BlueArrow down /></IconBtn>
          </div>
          <div className="ml-[11px] flex gap-[2px]">
            <IconBtn label="Μεγέθυνση περιοχής"><ZoomWin /></IconBtn>
            <IconBtn label="Εμφάνιση όλων"><ZoomAll /></IconBtn>
            <IconBtn label="Προηγούμενη μεγέθυνση"><ZoomPrev /></IconBtn>
          </div>
        </div>
        <div className="flex h-[27px] items-center gap-[2px] pl-[8px]">
          <IconBtn label="Διαφανές"><Cube front="#b8e0f5" top="#cfeaf8" side="#a5d3ec" line="#5f9cc0" /></IconBtn>
          <IconBtn label="Συρμάτινο"><Cube top="#7db4f5" /></IconBtn>
          <IconBtn label="Στερεό" on><SolidCube /></IconBtn>
          <span className="w-px" />
          <IconBtn label="Όψη"><Cube front="#3b8bea" back={false} /></IconBtn>
          <Caret className="ml-px mr-[9px] scale-75" />
          <IconBtn label="Φορέας" on><Frame3D /></IconBtn>
          <IconBtn label="Πλαίσιο"><Frame3D c="#9a7560" t="#a98a78" /></IconBtn>
          <IconBtn label="Γκρι φορέας"><Blob a="#666" b="#8a8a8a" /></IconBtn>
          <IconBtn label="Έγχρωμος φορέας"><Blob a="#1f9e55" b="#2777c8" /></IconBtn>
        </div>
      </div>
      <ul className="h-[442px] shrink-0 overflow-hidden border-t border-[#d6d6d6] bg-white pt-px font-[Roboto,sans-serif] text-[11px] leading-[17px] text-[#4b5157]">
        {viewItems.map((v) => (
          <li key={v.t} className="flex h-[17px] items-center">
            <span className="flex w-[20px] justify-center pr-[2px]">{!v.leaf && <Twist open={false} />}</span>
            <Tick on={v.on} label={v.t} />
            <span className={`ml-[4px] mr-[3px] flex flex-1 items-center gap-[2px] pl-[2px] ${v.hot ? "bg-[#efefef]" : ""} ${v.strong ? "text-black" : ""}`}>
              {treeIcons[v.i]}
              {v.t}
            </span>
          </li>
        ))}
      </ul>
      <div className="flex h-[28px] shrink-0 items-center gap-[2px] border-t border-[#d6d6d6] bg-[#efefef] pb-[3px] pl-[7px]">
        <IconBtn label="Προσθήκη επιλογής"><SelPlus /></IconBtn>
        <IconBtn label="Επιλογή πλαισίου"><Ic><path d="M1 1.500h12v9H1zM4 4h6v4H4z" stroke="#4a1232" strokeWidth="1.300" /><CursorPath x={10} y={5} /></Ic></IconBtn>
        <IconBtn label="Επιλογή πολυγώνου"><Ic><path d="M1 11.500 8 3l4-1.500v10zM5 9.500h4v-4z" stroke="#4a1232" strokeWidth="1.100" /><CursorPath x={9} y={5} /></Ic></IconBtn>
        <IconBtn label="Τομή"><Ic><path d="M1.500 1.500h12v12h-12zM5 4v8M9 4v8M2 6h11M2 10h11" stroke="#222" strokeWidth="1.100" /><CursorPath x={9} y={6} /></Ic></IconBtn>
        <IconBtn label="Ιδιότητες"><PropHand /></IconBtn>
        <span className="w-[9px]" />
        <IconBtn label="Απόσταση"><Dim /></IconBtn>
        <IconBtn label="Γωνία"><Ic><path d="M2 14h13M2 14 12 3M10 14c0-3-1-4-3-5" stroke="#222" /><path d="M2 2c0 4 4 4 4 1S4 1 4 4v3" stroke="#1f5fc8" /></Ic></IconBtn>
        <IconBtn label="Εμβαδόν"><Ic><path d="M1.500 1.500h13v13h-13z" stroke="#222" strokeWidth="1.400" strokeDasharray="3 1" /><path d="M11 5H5.500v7H11M6 8.500h4" stroke="#1f5fc8" strokeWidth="1.300" /></Ic></IconBtn>
      </div>
      <div className="flex h-[22px] shrink-0 items-center border-b border-[#c8c8c8] text-xs text-[#444]">
        <button className="flex h-full items-center gap-[2px] border-r border-[#bdbdbd] bg-white pl-[2px] pr-[4px]">
          <Ic><path d="M.5 1.500h15v12H.5z" fill="#e9f3fb" stroke="#9fc0da" /><path d="M2.500 4h2m-2 3.500h2m-2 3.500h2" stroke="#3b86c8" strokeWidth="1.500" /><path d="M6 4h7M6 7.500h7M6 11h7" stroke="#8db7d6" /></Ic>
          Εμφάνιση
        </button>
        <button className="ml-[3px] flex items-center gap-px">
          <Ic><path d="M1 6c3 9 10 9 13 0z" fill="#f3c531" /><path d="M1 4c2 10 11 10 13 2" stroke="#b3261e" strokeWidth="1.500" /><path d="M0 6.500h16" stroke="#7d1414" /><path d="M15 2v5" stroke="#e0a000" strokeWidth="2" /></Ic>
          Αποτελέσματα
        </button>
        <button className="ml-[9px] flex items-center gap-[2px]">
          <Ic><path d="M1 2h14v11H1z" fill="#dce9f6" /><path d="M1 7.500c3-5 11-5 14 0-3 5-11 5-14 0z" fill="#7eb0e0" stroke="#2e5c94" /><circle cx="8" cy="7.500" r="2.500" fill="#173a6b" /></Ic>
          Όψεις
        </button>
      </div>

      <div className="mt-[7px]"><PanelTitle>Πλοήγηση</PanelTitle></div>
      <div className="flex h-[24px] shrink-0 items-center bg-[#efefef] pl-[8px] text-xs text-[#444]">
        <button className="h-[19px] bg-[#cdcdcd] px-[2px]">Επιλ</button>
        <button className="ml-[6px]">Εικον</button>
        <button className="ml-[8px] mr-[8px]">Όλα</button>
        <Sep className="mr-[3px] h-[19px]" />
        <IconBtn label="Παράθυρο 1" on><GridDoc n="1" /></IconBtn>
        <span className="w-[3px]" />
        <IconBtn label="Παράθυρο 2"><GridDoc n="2" /></IconBtn>
      </div>
      <div className="flex flex-1 overflow-hidden border-t border-[#d6d6d6] bg-white pt-px font-[Roboto,sans-serif] text-[11px] leading-[17px] text-[#4b5157]">
        <ul className="flex-1">
          {navItems.map((v, n) => (
            <li key={n} className="flex h-[17px] items-stretch whitespace-nowrap">
              {Array.from({ length: v.l }, (_, k) => (
                <span key={k} className="flex w-[17px] shrink-0 justify-center">{k > 0 && <span className="w-px bg-[#d4d4d4]" />}</span>
              ))}
              <span className="relative flex w-[17px] shrink-0 items-center justify-center">
                {v.l > 0 && <span className="absolute inset-y-0 left-2 w-px bg-[#d4d4d4]" />}
                {v.l > 0 && <span className="absolute -right-px left-2 top-2 h-px bg-[#d4d4d4]" />}
                {v.s !== "leaf" && <Twist open={v.s === "open"} />}
              </span>
              <span className={`flex items-center gap-[2px] pl-[3px] ${v.hot ? "flex-1 bg-[#efefef]" : ""}`}>
                {v.i ?? <Folder />}
                {v.t}
              </span>
            </li>
          ))}
        </ul>
        <div className="w-[20px] pl-[15px] pt-[20px]"><div className="h-[61px] w-[2px] bg-[#a8a8a8]" /></div>
      </div>
    </aside>
  );
}

/* ---------- 3D model ---------- */

const columns: [number, number][] = [[1186, 52], [1813, 407], [787, 475], [1099, 362], [73, 437]];
const frontColumns: [number, number][] = [[700, 797], [1795, 767], [1483, 875]];
const walls = [
  "485,305 828,187 836,190 836,498 505,618 485,610",
  "301,570 320,563 533,690 533,988 515,995 301,877",
  "1414,182 1437,175 1646,297 1646,600 1628,605 1414,490",
  "2122,672 2230,628 2246,635 2246,943 2140,980 2122,972",
];
const wallLines = "M535 306V597M553 300V590M770 212V520M788 206V510M821 196V500M326 575V888M340 595V896M365 590V884M472 660V970M493 680V978M513 690V992M301 570 515 690M320 865 533 980M306 577 330 590 530 700 M1438 185V500M1453 195V505M1477 200V500M1585 265V575M1606 275V585M1626 300V605M1414 182 1630 297M1437 470 1646 590 M2140 672V975M2158 665V972M2173 660V965M2195 650V957M2215 645V950M2230 640V945M2122 680 2246 635M2130 965 2246 930";
const core = [
  "1111,665 1444,552 1444,862 1150,970 1111,968",
  "1444,550 1634,655 1634,962 1612,968 1444,870",
  "1140,680 1165,672 1322,770 1322,1070 1302,1078 1111,972 1111,690",
];
const coreFloor = "1165,672 1444,552 1634,655 1322,770";
const beams = [
  "120,434 497,305 503,368 130,492", "107,460 140,452 325,565 325,618 303,622 107,517",
  "513,325 540,315 851,490 851,545 790,525 513,378", "421,618 815,480 815,545 437,678 421,672",
  "511,692 533,686 745,800 722,850 700,850 511,748", "750,795 1130,665 1130,728 765,850",
  "820,497 855,493 1133,655 1133,728 1110,730 820,565", "820,477 1125,375 1160,440 850,545",
  "820,210 845,198 1163,375 1163,440 1100,420 820,267", "828,187 1205,60 1205,122 828,250",
  "1217,72 1250,65 1437,175 1440,230 1417,232 1217,127", "1120,375 1515,238 1529,245 1529,300 1130,435",
  "1140,370 1165,378 1460,550 1440,607 1415,607 1125,448", "1425,555 1835,418 1835,482 1460,610",
  "1624,300 1646,295 1875,425 1875,470 1830,462 1624,355", "1850,420 1875,420 2220,622 2220,680 2198,683 1850,495",
  "1834,772 2125,668 2142,675 2142,728 1855,826 1834,820", "1611,665 1634,657 1840,775 1820,838 1798,838 1611,715",
  "1300,770 1611,662 1611,688 1335,787", "1300,775 1323,765 1515,880 1505,950 1485,953 1300,825",
  "1525,882 1820,775 1820,838 1546,935 1525,930", "1201,992 1505,885 1505,950 1218,1048 1201,1042",
];
const beamLines = "M130 447 490 322M150 470 495 355M120 475 325 595M140 500 310 600M530 335 790 490M440 635 800 505M450 660 790 540M520 705 730 820M540 740 700 835M780 808 1110 695M830 525 1120 690M860 500 1110 650M860 510 1090 432M850 475 1100 395M835 225 1100 380M850 260 1090 400M840 205 1190 85M850 235 1190 115M1250 85 1420 185M1250 115 1415 215M1180 375 1510 262M1180 400 1510 290M1165 410 1420 560M1170 450 1410 585M1470 570 1810 450M1480 590 1810 470M1646 325 1830 430M1646 350 1815 450M1880 455 2200 640M1880 480 2190 655M1870 780 2120 695M1870 800 2120 715M1650 695 1790 775M1650 715 1795 800M1340 810 1480 890M1570 895 1790 815M1570 915 1790 840M1230 1010 1480 925M1230 1030 1480 945";

function Column({ x, y }: { x: number; y: number }) {
  return (
    <g>
      <path d={`M${x} ${y + 15}l30-15 34 12v306l-34 12-30-12z`} fill="#1f8a33" fillOpacity=".75" />
      <path d={`M${x} ${y + 15}l30-15 34 12-34 12zM${x + 30} ${y + 20}V${y + 328}M${x + 37} ${y + 20}V${y + 300}M${x} ${y + 318}l34-14 30 12-34 14zM${x} ${y + 15}v303M${x + 64} ${y + 12}v305`} stroke="#186b28" strokeWidth="3" fill="none" strokeOpacity=".7" />
      <path d={`M${x + 5} ${y + 14}l27-10 28 9-27 9z`} fill="#1c6e2a" fillOpacity=".7" />
      <path d={`M${x + 19} ${y + 189}h7v7h-7z`} fill="#174f22" />
    </g>
  );
}

function Model() {
  return (
    <svg width="1210" height="460" viewBox="-558 -18 3630 1380" className="block" role="img" aria-label="Τρισδιάστατο μοντέλο">
      {columns.map(([x, y]) => <Column key={x} x={x} y={y} />)}
      {walls.map((p) => <polygon key={p} points={p} fill="#22cc22" fillOpacity=".74" stroke="#22b822" strokeWidth="3" />)}
      <path d={wallLines} stroke="#12a012" strokeWidth="2.500" fill="none" />
      <path d="M500 305 822 190" stroke="#3d6b1c" strokeWidth="10" strokeOpacity=".8" />
      <path d="M505 303 822 192" stroke="#a08a3a" strokeWidth="3" strokeDasharray="9 6" />
      {core.map((p) => <polygon key={p} points={p} fill="#27934a" fillOpacity=".5" stroke="#3c8b55" strokeWidth="2.500" />)}
      <polygon points="1150,690 1302,770 1302,905 1150,968" fill="#229a36" fillOpacity=".4" />
      <polygon points={coreFloor} fill="#ffffff" fillOpacity=".12" />
      <path d="M1444 552V862M1150 690V968M1262 745V1050M1282 755V1060M1302 770V1075M1574 640V945M1595 650V950M1150 968 1444 862 1612 960M1165 690 1322 775M1444 560 1620 665" stroke="#2c7a44" strokeWidth="3" fill="none" />
      <path d="m1330 637 20 10m-20 0 20-10m6-6 6-4m4 6h8" stroke="#222" strokeWidth="3.500" />
      {beams.map((p) => <polygon key={p} points={p} fill="#1a83ff" fillOpacity=".7" />)}
      <path d={beamLines} stroke="#1566d6" strokeWidth="2.500" strokeOpacity=".7" fill="none" />
      <path d="m235 430 5-9 6 8M250 560h8v6M940 178l10 4-10 5M1020 346l10 6M915 474l10 3-6 6M920 570h10l-8 6M655 790l8 6M1360 168v8m6-8v8M1260 354l8 6M1230 460l6 6M1705 490h12v6M1765 400l6 8M2090 590l10 2M1925 768l14-4M1745 765l8 5M1400 948h8v6" stroke="#17488f" strokeWidth="3" fill="none" />
      <path d="M405 802v16M411 802v4m0 8v4M1147 1185v20M1520 412v16m5-14v6M2178 825v20" stroke="#137a1c" strokeWidth="4" />
      <path d="m1533 228 10 4 8-7h10v6h-8" stroke="#a8322a" strokeWidth="3" fill="none" />
      {frontColumns.map(([x, y]) => <Column key={x} x={x} y={y} />)}
      <polygon points="1093,1033 1200,990 1217,998 1217,1300 1112,1340 1093,1332" fill="#22cc22" fillOpacity=".78" stroke="#22b822" strokeWidth="3" />
      <path d="M1112 1040V1335M1127 1030V1322M1145 1025V1328M1165 1015V1315M1184 1008V1305M1204 1005V1300M1093 1040 1217 995M1100 1325 1217 1285" stroke="#12a012" strokeWidth="3" fill="none" />
      <path d="m1130 1034 16 12m14-36 25-10" stroke="#185f20" strokeWidth="4" />
      <polygon points="745,725 1093,925 1093,1010 745,812" fill="#ffff80" fillOpacity=".5" stroke="#ffff30" strokeWidth="4" />
      <polygon points="733,812 1105,1012 1105,1075 1085,1082 1060,1072 1045,1060 1030,1056 1000,1036 985,1032 960,1014 945,1010 925,994 900,982 885,978 860,958 845,954 820,936 800,928 775,910 760,906 733,885" fill="#1a85fb" />
      <path d="M750 820 1095 1012" stroke="#2b6f55" strokeWidth="6" strokeDasharray="22 12" />
      <path d="M745 812 1093 1010M832 775V855M919 826V912M1006 876V962" stroke="#f5f03c" strokeWidth="4" />
      <path d="M914 905h10v12h-10zM1001 955h10v12h-10zM1088 1004h10v12h-10zM741 800h10v12h-10z" fill="#ffee20" />
      <g transform="translate(2940 -135)" strokeWidth="7" fill="none">
        <path d="M48 197V140m-8 14 8-14 8 14M40 130h14l-14 0" stroke="#1e4fc0" />
        <path d="m48 197 52-15m-12-6 14 6-10 10m10-18 12 16m0-16-14 16" stroke="#d8201c" />
        <path d="M48 197 8 180m10-6-12 5 10 10M-4 172l8 8" stroke="#22b53a" />
      </g>
    </svg>
  );
}

/* ---------- centre ---------- */

function LoadTable() {
  const th = "border border-black font-normal overflow-hidden whitespace-nowrap p-0";
  return (
    <table className="-mt-px w-[1106px] table-fixed border-collapse text-xs text-[#1a1a2a]">
      <colgroup>{colW.map((w, i) => <col key={i} className={w} />)}</colgroup>
      <thead className="bg-[#f0f0f0]">
        <tr className="h-[22px]"><th colSpan={21} className={th}>Γραμμικά Φορτία Στοιχείων</th></tr>
        <tr className="h-[22px]">
          {["α/α", "Στοιχείο", "Π.Φ.", "Αίτιο", "Διευθ."].map((t) => <th key={t} rowSpan={3} className={th}>{t}</th>)}
          <th className={th}>Μήκος</th><th colSpan={2} className={th}>Αρχή-Τέλος</th><th className={th}>Μήκος</th>
          <th colSpan={2} className={th}>Γραμμικό Φορτίο</th><th className={th}>Φορτίο</th><th colSpan={3} className={th}>Θέση Συνισταμένης</th>
          <th colSpan={3} className={th}>Συνολική Δύναμη</th><th colSpan={3} className={th}>Συνολική Ροπή</th>
        </tr>
        <tr className="h-[22px]">
          {["L", "x1", "x2", "Δx", "q1", "q2", "Q", "x", "y", "z", "Qx", "Qy", "Qz", "Mx", "My", "Mz"].map((t) => <th key={t} className={th}>{t}</th>)}
        </tr>
        <tr className="h-[22px]">
          <th colSpan={4} className={th}>m</th><th colSpan={2} className={th}>kN/m</th><th className={th}>kN</th>
          <th colSpan={3} className={th}>m</th><th colSpan={3} className={th}>kN</th><th colSpan={3} className={th}>kN·m</th>
        </tr>
      </thead>
      <tbody>
        {rows.map((r) => (
          <tr key={r[0]} className="h-[20px]">
            {r.map((v, c) => (
              <td key={c} className={`overflow-hidden whitespace-nowrap border border-[#6e6e6e] pb-[2px] pt-0 leading-[17px] ${cellTone(c)} ${c === 4 ? "px-0 text-center" : c > 0 && c < 4 ? "px-[2px]" : "px-[2px] text-right"} ${v === "Τοιχοπλ" ? "outline-2 -outline-offset-2 outline-black" : ""}`}>{v}</td>
            ))}
          </tr>
        ))}
        <tr className="h-[20px] bg-white font-bold">
          {total.map((v, c) => (
            <td key={c} className={`overflow-hidden whitespace-nowrap border border-[#6e6e6e] px-[2px] pb-[2px] pt-0 leading-[17px] ${c === 0 ? "border-black bg-[#f0f0f0] text-right font-normal" : c > 4 ? "text-right" : ""}`}>{v}</td>
          ))}
        </tr>
      </tbody>
    </table>
  );
}

function Centre() {
  return (
    <main className="mx-[6px] flex min-w-0 flex-1 flex-col text-xs text-[#444]">
      <div className="flex h-[33px] shrink-0 bg-[#f0f0f0]">
        <p className="flex-1 text-[13px] leading-[16px] text-[#666]">Αίτιο από το οποίο προέρχεται το φορτίο. Μόνο φορτία που έχει εισάγει ο χρήστης μπορούν να αλλάξουν εδώ.</p>
        <div className="flex w-[18px] flex-col items-center justify-center gap-[8px] border-l border-[#ddd] pb-[4px]">
          <svg width="8" height="6" viewBox="0 0 8 6" aria-hidden="true"><path d="M0 6h8L4 0z" fill="#999" /></svg>
          <svg width="8" height="6" viewBox="0 0 8 6" aria-hidden="true"><path d="M0 0h8L4 6z" fill="#999" /></svg>
        </div>
      </div>
      <div className="shrink-0 overflow-hidden border-b border-l-2 border-t-2 border-[#8a8a8a] border-b-[#c4c4c4] bg-white"><Model /></div>
      <section className="mt-[7px] flex min-h-0 flex-1 flex-col">
        <PanelTitle>Παράθυρο Εργασίας 1</PanelTitle>
        <div className="flex h-[26px] shrink-0 items-center bg-[#efefef] pb-[3px] pl-[10px]">
          <button className="h-[19px] bg-[#cdcdcd] px-[2px]">Επιλεγμένα</button>
          <button className="ml-[3px]">Εικονιζόμενα</button>
          <button className="ml-[6px]">Όλα</button>
          <Sep className="mx-[6px] h-[19px]" />
          <label htmlFor="case">Περίπτωση Φόρτισης:</label>
          <Combo id="case" value="G" className="ml-[5px] h-[20px] w-[106px]" />
          <Sep className="mx-[6px] h-[19px]" />
          <button className="flex items-center gap-[2px]">
            <Ic><path d="M0 12.500h16M1.500 12V9.500h3V7h3V5H14v7M4.500 12V9M7.500 12V7M11 12V5M2 9.500h12" stroke="#c22027" strokeWidth="1.100" /></Ic>
            Προσθήκη Φορτίων
          </button>
        </div>
        <div className="min-h-0 flex-1 overflow-hidden border-b border-r border-t border-[#777] bg-[#f0f0f0]"><LoadTable /></div>
        <div className="flex h-[23px] shrink-0 items-center bg-[#ececec]">
          <button className="flex items-center gap-[3px] px-[6px] pr-[7px]">
            <Ic s={12} vb={12}><rect x="1.500" y=".5" width="8.500" height="11" stroke="#444" fill="#fff" /></Ic>Αποτελέσματα
          </button>
          <button className="flex h-[21px] items-center gap-px border border-t-0 border-[#999] bg-white px-[2px]"><GridDoc n="1" />Παράθυρο Εργασίας 1</button>
          <button className="ml-[4px] flex items-center gap-px"><GridDoc n="2" />Παράθυρο Εργασίας 2</button>
        </div>
      </section>
    </main>
  );
}

/* ---------- right column ---------- */

function Section() {
  return (
    <svg width="401" height="273" viewBox="0 0 401 273" fill="none" className="block" role="img" aria-label="Διατομή δοκού">
      <g transform="translate(-54 -77) scale(.33333)">
        <path d="M442 319h646v162H899v484H631V481H442z" stroke="#d8b45c" strokeWidth="3" />
        <rect x="673" y="355" width="183" height="567" rx="14" stroke="#c0182a" strokeWidth="3.500" />
        <rect x="682" y="364" width="166" height="549" rx="4" stroke="#c0182a" strokeWidth="3.500" />
        <path d="M766 350v206h206" stroke="#c0182a" strokeWidth="3" />
        <path d="m828 366-52 52m58-48-52 52m58-42-52 52m56-40-50 50" stroke="#c0182a" strokeWidth="2.500" />
        {[[688, 372], [842, 372], [690, 905], [741, 905], [788, 905], [840, 905]].map(([x, y]) => <circle key={`${x}${y}`} cx={x} cy={y} r="9" fill="#8c0f26" />)}
        <circle cx="687" cy="639" r="5" fill="#a01028" />
        <circle cx="842" cy="639" r="5" fill="#a01028" />
        <circle cx="210" cy="643" r="16" fill="#7a0a2c" />
        <path d="M190 992h241v35H190z" stroke="#111" strokeWidth="3.500" />
        <path d="M250 992h121v35H250z" fill="#22cc22" stroke="#b53a1c" strokeWidth="3" />
        <path d="M213 1002h15v15h-15zM393 1002h15v15h-15z" fill="#e0162a" />
        <path d="M303 1002h15v15h-15z" fill="#a33a14" />
      </g>
      <g fontFamily="'Liberation Mono', monospace">
        <text x="140" y="14" fontSize="14" fill="#111">4Φ14+2Φ12+2Φ08</text>
        <text x="29" y="142" fontSize="14" fill="#111">B500C</text>
      </g>
      <g fontFamily="'Liberation Sans', sans-serif" fill="#c0182a" fontSize="15">
        <text x="264" y="122">3</text>
        <text transform="translate(214 45) rotate(-90)">2</text>
      </g>
    </svg>
  );
}

function PropRow({ p }: { p: Prop }) {
  const head = p.k === "head";
  if (head || p.k === "headcheck") {
    return (
      <div className="flex h-[17px] items-center whitespace-nowrap bg-[#efefef] text-[13px] font-bold text-[#444]">
        <span className={`flex justify-center ${head ? "w-[21px]" : "ml-[18px] w-[18px]"}`}>
          <svg width="7" height="8" viewBox="0 0 7 8" fill="none" aria-hidden="true">{head ? <path d="M6 1v6H0z" fill="#a2a2a2" /> : <path d="m1 1 4.500 3L1 7z" stroke="#b0b0b0" />}</svg>
        </span>
        {p.k === "headcheck" && <Tick label={p.n} />}
        <span className={p.k === "headcheck" ? "ml-[6px]" : ""}>{p.n}</span>
      </div>
    );
  }
  const inset = p.k === "sub" || p.k === "subsub";
  return (
    <div className={`flex h-[17px] ${p.k === "mute" ? "text-[#b4b4b4]" : ""}`}>
      <div className={`flex shrink-0 justify-center bg-[#efefef] ${inset ? "w-[35px]" : "w-[18px]"}`}>
        {p.k === "sub" && <svg width="7" height="8" viewBox="0 0 7 8" className="ml-[15px] mt-[4px]" aria-hidden="true"><path d="M6 1v6H0z" fill="#a2a2a2" /></svg>}
      </div>
      <div className={`flex shrink-0 items-center overflow-hidden whitespace-nowrap border-b border-r border-[#e6e6e6] ${inset ? "w-[167px]" : "w-[184px]"} ${p.k === "subsub" ? "pl-[19px]" : "pl-[2px]"}`}>
        {p.k === "check" ? (
          <label className="flex items-center gap-[6px]"><input type="checkbox" className="h-[12px] w-[12px] appearance-none border border-[#9a9a9a] bg-white" />{p.n}</label>
        ) : <span className="pl-[1px]">{p.n}</span>}
      </div>
      <div className="flex flex-1 items-center border-b border-[#e6e6e6] pl-[4px]">
        <span className="flex-1">{p.v}</span>
        {p.more && <button aria-label="Επιλογή διατομής" className="flex h-[15px] w-[16px] items-end justify-center border border-[#999] bg-[#e2e2e2] text-[11px] leading-[13px]">...</button>}
      </div>
    </div>
  );
}

function RightColumn() {
  return (
    <aside className="flex w-[404px] shrink-0 flex-col bg-[#e5e5e5]">
      <div className="flex h-[45px] shrink-0 items-center pl-[4px] pt-[3px]">
        <h2 className="flex-1 text-xl text-[#555]">Επιλεγμένα Στοιχεία</h2>
        <button aria-label="Σύμπτυξη" className="mb-[22px] mr-[8px]"><svg width="4" height="7" viewBox="0 0 4 7" aria-hidden="true"><path d="M4 0v7L0 3.500z" fill="#555" /></svg></button>
      </div>
      <div className="flex h-[26px] shrink-0 items-center bg-[#efefef] pb-[2px] pl-[11px] text-xs text-[#444]">
        <IconBtn label="Προσθήκη επιλογής"><SelPlus /></IconBtn>
        <Sep className="mx-[5px] h-[19px]" />
        <Combo label="Επιλεγμένα" value="1 Γραμμικά Στοιχεία" className="h-[21px] w-[116px] text-[11px]" />
        <Sep className="mx-[6px] h-[19px]" />
        <button className="w-[18px] pb-[3px] text-[11px] text-black">img</button>
        <Sep className="mx-[5px] h-[19px]" />
        <IconBtn label="Εμφάνιση όλων"><ZoomAll /></IconBtn>
        <span className="w-[2px]" />
        <IconBtn label="Μεγέθυνση περιοχής"><ZoomWin /></IconBtn>
        <Sep className="mx-[4px] h-[19px]" />
        <div className="flex gap-[2px]">
          <IconBtn label="Πάνω όψη" on><Cube top="#7db4f5" /></IconBtn>
          <IconBtn label="Μπροστινή όψη"><Cube front="#8cc7ea" line="#8a8a8a" back={false} /></IconBtn>
          <IconBtn label="Πλάγια όψη"><Cube side="#8cc7ea" line="#8a8a8a" /></IconBtn>
          <IconBtn label="Στερεό"><SolidCube light /></IconBtn>
        </div>
        <Sep className="mx-[5px] h-[19px]" />
        <IconBtn label="Αντιγραφή"><Ic><path d="M1 1.500h6l2 2v8H1z" fill="#e8f1fb" stroke="#4b79b8" /><path d="M6 4.500h6l3 3v8H6z" fill="#d4e5f8" stroke="#2f5fa6" /><path d="M8 8h5M8 10.500h5M8 13h5" stroke="#2f5fa6" /></Ic></IconBtn>
      </div>
      <div className="ml-px mr-[2px] mt-[2px] shrink-0 bg-white"><Section /></div>
      <div className="mt-[5px] flex h-[501px] shrink-0 overflow-hidden bg-white font-[Roboto,sans-serif] text-[11px] leading-[16px] text-[#4b5157]">
        <div className="w-[386px]">{props.map((p, i) => <PropRow key={i} p={p} />)}</div>
        <div className="pl-[14px] pt-[17px]"><div className="h-[252px] w-[2px] bg-[#a8a8a8]" /></div>
      </div>
      <div className="mt-[4px] min-h-0 flex-1 border-t border-[#c4c4c4] bg-[#efefef]" />
      <div className="flex h-[8px] shrink-0 items-center justify-center bg-[#cbcbcb]">
        <div className="w-[58px] border-t-2 border-dotted border-white" />
      </div>
      <div className="flex h-[30px] shrink-0 items-center justify-end gap-[2px] bg-[#efefef] pr-px">
        <button aria-label="Πληροφορίες" className="flex h-full w-[24px] items-center justify-center bg-[#cbcbcb]">
          <Ic><path d="M4 1h8v14H4z" fill="#f6f000" /><path d="M8 3v1.500M6.500 7h2v5M6 12.500h5" stroke="#111" strokeWidth="2" /></Ic>
        </button>
        {[
          <Ic key="a"><path d="m1 4 7-3 7 2-7 3zM1 7l7 2 7-3M1 10l7 2 7-3M1 13l7 2 7-3M1 4v1l7 2" stroke="#222" strokeWidth="1.300" fill="#ccc" /></Ic>,
          <Ic key="b"><path d="M1.500 2v12h13v-4H7L6 2z" stroke="#222" fill="#fff" /><path d="m2 8 4-4M3 13l5-4m0 4 4-3" stroke="#222" /><path d="M11 1v8M7 5h8" stroke="#18a045" strokeWidth="2.200" /></Ic>,
          <Ic key="c"><path d="M1.500 3.500h12v11h-12z" stroke="#222" strokeWidth="1.300" /><circle cx="7" cy="9" r="3" stroke="#c22" strokeWidth="1.400" /><path d="M2 9h2m6 0h3M7 4v2m0 6v2" stroke="#c22" /><path d="M12 0v7M8.500 3.500h7" stroke="#18a045" strokeWidth="2.200" /></Ic>,
          <Ic key="d"><path d="M1.500 1v13.500H15" stroke="#222" /><path d="M2 3c4 1 4 6 12 6" stroke="#c6862e" strokeWidth="1.300" /><path d="M2 7c4 1 4 5 12 5" stroke="#446" strokeWidth="1.300" /><path d="M10 5V1l4 4V1" stroke="#222" /></Ic>,
          <Ic key="e"><path d="M1.500 1v13.500H15" stroke="#222" strokeWidth="1.300" /><path d="M3 12V9m3 4V6m3 7V4" stroke="#2a8f45" strokeWidth="1.500" /><path d="M10 6h5v8h-5z" fill="#e0261e" /><path d="m3 8 6-5" stroke="#222" strokeDasharray="1 1" /></Ic>,
          <Ic key="f"><path d="M4 1.500c-3-1-3 5 0 4M7 1v5m0-5h2v5m2 0V1l3 5m0-5-3 5" stroke="#223" strokeWidth="1.300" /><path d="M2 8v6" stroke="#d22" strokeWidth="2" /><path d="M6 8v6" stroke="#2a9a4a" strokeWidth="2" /><path d="M10 8v6" stroke="#e59a2c" strokeWidth="2" /><path d="M14 8v6" stroke="#d22" strokeWidth="2" /></Ic>,
          <Ic key="g"><path d="M3 1.500h7l3 3v10H3z" fill="#fff" stroke="#555" /><path d="M5 6h6v6H5z" fill="#8a94b8" /><path d="M5 4h4m-3 9h5" stroke="#777" /></Ic>,
          <Ic key="h"><rect x="2" y="1.500" width="11.500" height="13.500" rx="2" stroke="#7d1030" strokeWidth="1.300" /><path d="m12 3-4 4" stroke="#7d1030" /></Ic>,
          <Ic key="i"><path d="M1.500 1.500h13v13h-13z" stroke="#222" strokeWidth="1.300" /><path d="M4 4h2v9M4 8h3m2-2v7m3-4v4M9 10h4M4 13h9" stroke="#24529c" strokeWidth="1.200" /></Ic>,
        ].map((ic, i) => (
          <button key={i} aria-label={`Εργαλείο ${i + 1}`} className="flex h-full w-[24px] items-center justify-center">{ic}</button>
        ))}
        <button aria-label="Χρώματα" className="flex h-full w-[24px] items-center justify-center">
          <span className="h-[15px] w-[15px] rounded-full bg-[radial-gradient(circle,white_10%,transparent_45%),conic-gradient(#d22,#c3d,#24c,#2bd,#2b4,#dd2,#e82,#d22)]" />
        </button>
        <button aria-label="Περισσότερα" className="flex h-full w-[24px] flex-col items-center justify-center gap-1">
          <Ic s={8} vb={8}><path d="m1 1 3 3-3 3m3-6 3 3-3 3" stroke="#777" /></Ic>
          <Caret className="scale-75" />
        </button>
      </div>
    </aside>
  );
}

/* ---------- page ---------- */

export default function App() {
  return (
    <div className="flex h-screen flex-col overflow-hidden bg-[#e5e5e5] font-['Noto_Sans',sans-serif]">
      <Ribbon />
      <div className="flex min-h-0 flex-1">
        <LeftColumn />
        <Centre />
        <div className="w-px shrink-0 bg-[#ccc]" />
        <RightColumn />
      </div>
      <footer className="flex h-[23px] shrink-0 items-center border-t border-[#cfcfcf] bg-[#f0f0f0] pt-px text-xs text-[#444]">
        <a href="#home" className="w-[448px] pl-[7px]">www.tol.com.gr</a>
        <button aria-label="Προβολή πίνακα" className="flex w-[32px] items-center gap-1 pl-[7px]"><GridDoc n="" /><Caret className="scale-75" /></button>
        <button aria-label="Προβολή λίστας" className="ml-[6px] w-[31px]"><Ic><path d="M1 4h2M1 8h2M1 12h2" stroke="#24529c" strokeWidth="2" /><path d="M5 4h11M5 8h11M5 12h11" stroke="#3b7fd0" strokeWidth="1.500" /></Ic></button>
        <span className="w-[456px] whitespace-nowrap">ΕΥΡΩΚΩΔΙΚΕΣ | Ιδιομορφική | Κ.Π.Μ. | q=3.50 | Σχεδιασμού | Τύπος 1</span>
        <span className="w-[403px]">Νέο Έργο</span>
        <Ic s={13} vb={13}><path d="M3.500 6V3.500c0-3.500 6-3.500 6 0V6" stroke="#a36a1c" strokeWidth="1.500" /><path d="M1.500 6h10v6.500h-10z" fill="#eaa93c" stroke="#a36a1c" /><path d="M6.500 8v2.500" stroke="#522" /></Ic>
        <div className="ml-auto flex h-full items-center">
          <button className="flex items-center gap-[6px]">κάναβος <Chevron /></button>
          <button className="ml-[4px] mr-[7px]">έλξη</button>
          <button className="h-[21px] border border-[#2b579a] bg-[#cdcdcd] px-px">dxf</button>
          <button className="h-[21px] border border-[#2b579a] bg-[#cdcdcd] px-[3px]">έλξη</button>
          <button className="ml-[5px]">κάθετα</button>
          <button aria-label="Σμίκρυνση" className="ml-[14px] h-[2px] w-[8px] bg-[#999]" />
          <input type="range" aria-label="Μεγέθυνση" defaultValue={50} className="ml-[10px] h-[14px] w-[87px] appearance-none bg-[linear-gradient(#aaa,#aaa)] bg-[length:100%_1px] bg-center bg-no-repeat [&::-webkit-slider-thumb]:h-[14px] [&::-webkit-slider-thumb]:w-[5px] [&::-webkit-slider-thumb]:appearance-none [&::-webkit-slider-thumb]:bg-[#555]" />
          <button aria-label="Μεγέθυνση +" className="ml-[11px] mr-[4px]"><Ic s={8} vb={8}><path d="M4 0v8M0 4h8" stroke="#999" strokeWidth="1.500" /></Ic></button>
        </div>
      </footer>
    </div>
  );
}
